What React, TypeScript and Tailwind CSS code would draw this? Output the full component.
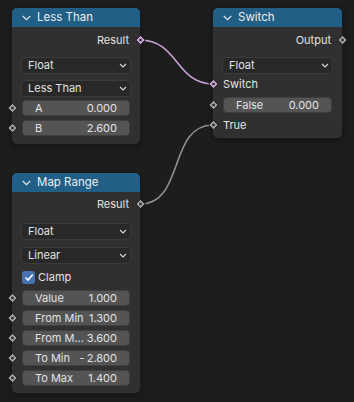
import type { ReactNode } from 'react'

type SocketKind = 'float' | 'bool'

const FONT = { fontFamily: 'Inter, "DejaVu Sans", sans-serif' }

function Socket({ kind, side }: { kind: SocketKind; side: 'left' | 'right' }) {
  const fill = kind === 'bool' ? '#cca6d6' : '#a1a1a1'
  return (
    <svg
      width="11"
      height="11"
      viewBox="0 0 11 11"
      className={`absolute top-1/2 -translate-y-1/2 ${side === 'left' ? '-left-[5.5px]' : '-right-[5.5px]'}`}
    >
      <path d="M5.5 0.8 L10.2 5.5 L5.5 10.2 L0.8 5.5 Z" fill={fill} stroke="#1a1a1a" strokeWidth="1" />
      <rect x="4.3" y="4.3" width="2.4" height="2.4" fill="#2a2a2a" />
    </svg>
  )
}

function Chevron() {
  return (
    <svg width="8" height="5" viewBox="0 0 8 5" className="shrink-0">
      <path d="M1 1 L4 4 L7 1" fill="none" stroke="#d9d9d9" strokeWidth="1.1" />
    </svg>
  )
}

function Header({ title }: { title: string }) {
  return (
    <div className="flex h-[19px] items-center gap-[6px] rounded-t-[5px] bg-[#215f86] pl-[10px] text-[11.5px] text-[#ececec]">
      <svg width="9" height="6" viewBox="0 0 9 6">
        <path d="M0.8 1 L4.5 4.7 L8.2 1" fill="none" stroke="#e6e6e6" strokeWidth="1.1" />
      </svg>
      <span>{title}</span>
    </div>
  )
}

function OutRow({ label, kind, mt }: { label: string; kind: SocketKind; mt: string }) {
  return (
    <div className={`relative flex h-[16px] items-center justify-end pr-[11px] ${mt}`}>
      <span>{label}</span>
      <Socket kind={kind} side="right" />
    </div>
  )
}

function InRow({ label, kind, mt }: { label: string; kind: SocketKind; mt: string }) {
  return (
    <div className={`relative flex h-[16px] items-center pl-[10px] ${mt}`}>
      <span>{label}</span>
      <Socket kind={kind} side="left" />
    </div>
  )
}

function Dropdown({ label, mt }: { label: string; mt: string }) {
  return (
    <div className={`mx-[9px] flex h-[17px] items-center justify-between rounded-[4px] border border-[#3b3b3b] bg-[#282828] pl-[6px] pr-[3px] ${mt}`}>
      <span>{label}</span>
      <Chevron />
    </div>
  )
}

function Field({ label, value, mt, socket = true }: { label: string; value: ReactNode; mt: string; socket?: boolean }) {
  return (
    <div className={`relative ${mt}`}>
      <div className="mx-[10px] flex h-[16px] items-center justify-between rounded-[4px] border border-[#3f3f3f] bg-[#545454] px-[12px]">
        <span>{label}</span>
        <span>{value}</span>
      </div>
      {socket && <Socket kind="float" side="left" />}
    </div>
  )
}

function Node({ title, className, children }: { title: string; className: string; children: ReactNode }) {
  return (
    <div
      className={`absolute flex flex-col rounded-[5px] bg-[#303030] text-[11px] text-[#e2e2e2] shadow-[0_0_0_1px_#191919,0_2px_6px_rgba(0,0,0,0.45)] ${className}`}
    >
      <Header title={title} />
      {children}
    </div>
  )
}

export default function App() {
  return (
    <div className="relative h-[402px] w-[354px] overflow-hidden bg-[#1d1d1d]" style={FONT}>
      {/* Links */}
      <svg className="absolute inset-0" width="354" height="402">
        <path d="M140 40 C 178 40, 176 84, 213 84" fill="none" stroke="#c9a2d4" strokeWidth="1.6" />
        <path d="M140 204 C 185 204, 168 125, 213 125" fill="none" stroke="#8f8f8f" strokeWidth="1.6" />
      </svg>

      <Node title="Less Than" className="left-[12px] top-[8px] w-[128px] pb-[8px]">
        <OutRow label="Result" kind="bool" mt="mt-[5px]" />
        <Dropdown label="Float" mt="mt-[9px]" />
        <Dropdown label="Less Than" mt="mt-[6px]" />
        <Field label="A" value="0.000" mt="mt-[3px]" />
        <Field label="B" value="2.600" mt="mt-[4px]" />
      </Node>

      <Node title="Switch" className="left-[213px] top-[8px] w-[129px] pb-[5px]">
        <OutRow label="Output" kind="float" mt="mt-[5px]" />
        <Dropdown label="Float" mt="mt-[9px]" />
        <InRow label="Switch" kind="bool" mt="mt-[2px]" />
        <Field label="False" value="0.000" mt="mt-[5px]" />
        <InRow label="True" kind="float" mt="mt-[4px]" />
      </Node>

      <Node title="Map Range" className="left-[12px] top-[173px] w-[128px] pb-[7px]">
        <OutRow label="Result" kind="float" mt="mt-[4px]" />
        <Dropdown label="Float" mt="mt-[11px]" />
        <Dropdown label="Linear" mt="mt-[7px]" />
        <div className="ml-[10px] mt-[6px] flex h-[14px] items-center gap-[3px]">
          <div className="flex h-[13px] w-[13px] items-center justify-center rounded-[3px] bg-[#4772b3]">
            <svg width="10" height="9" viewBox="0 0 10 9">
              <path d="M1.5 4.5 L4 7 L8.7 1.6" fill="none" stroke="#ffffff" strokeWidth="1.6" />
            </svg>
          </div>
          <span>Clamp</span>
        </div>
        <Field label="Value" value="1.000" mt="mt-[6px]" />
        <Field label="From Min" value="1.300" mt="mt-[4px]" />
        <Field label="From M..." value="3.600" mt="mt-[4px]" />
        <Field
          label="To Min"
          value={
            <>
              -<span className="ml-[2px]">2.800</span>
            </>
          }
          mt="mt-[4px]"
        />
        <Field label="To Max" value="1.400" mt="mt-[4px]" />
      </Node>
    </div>
  )
}
